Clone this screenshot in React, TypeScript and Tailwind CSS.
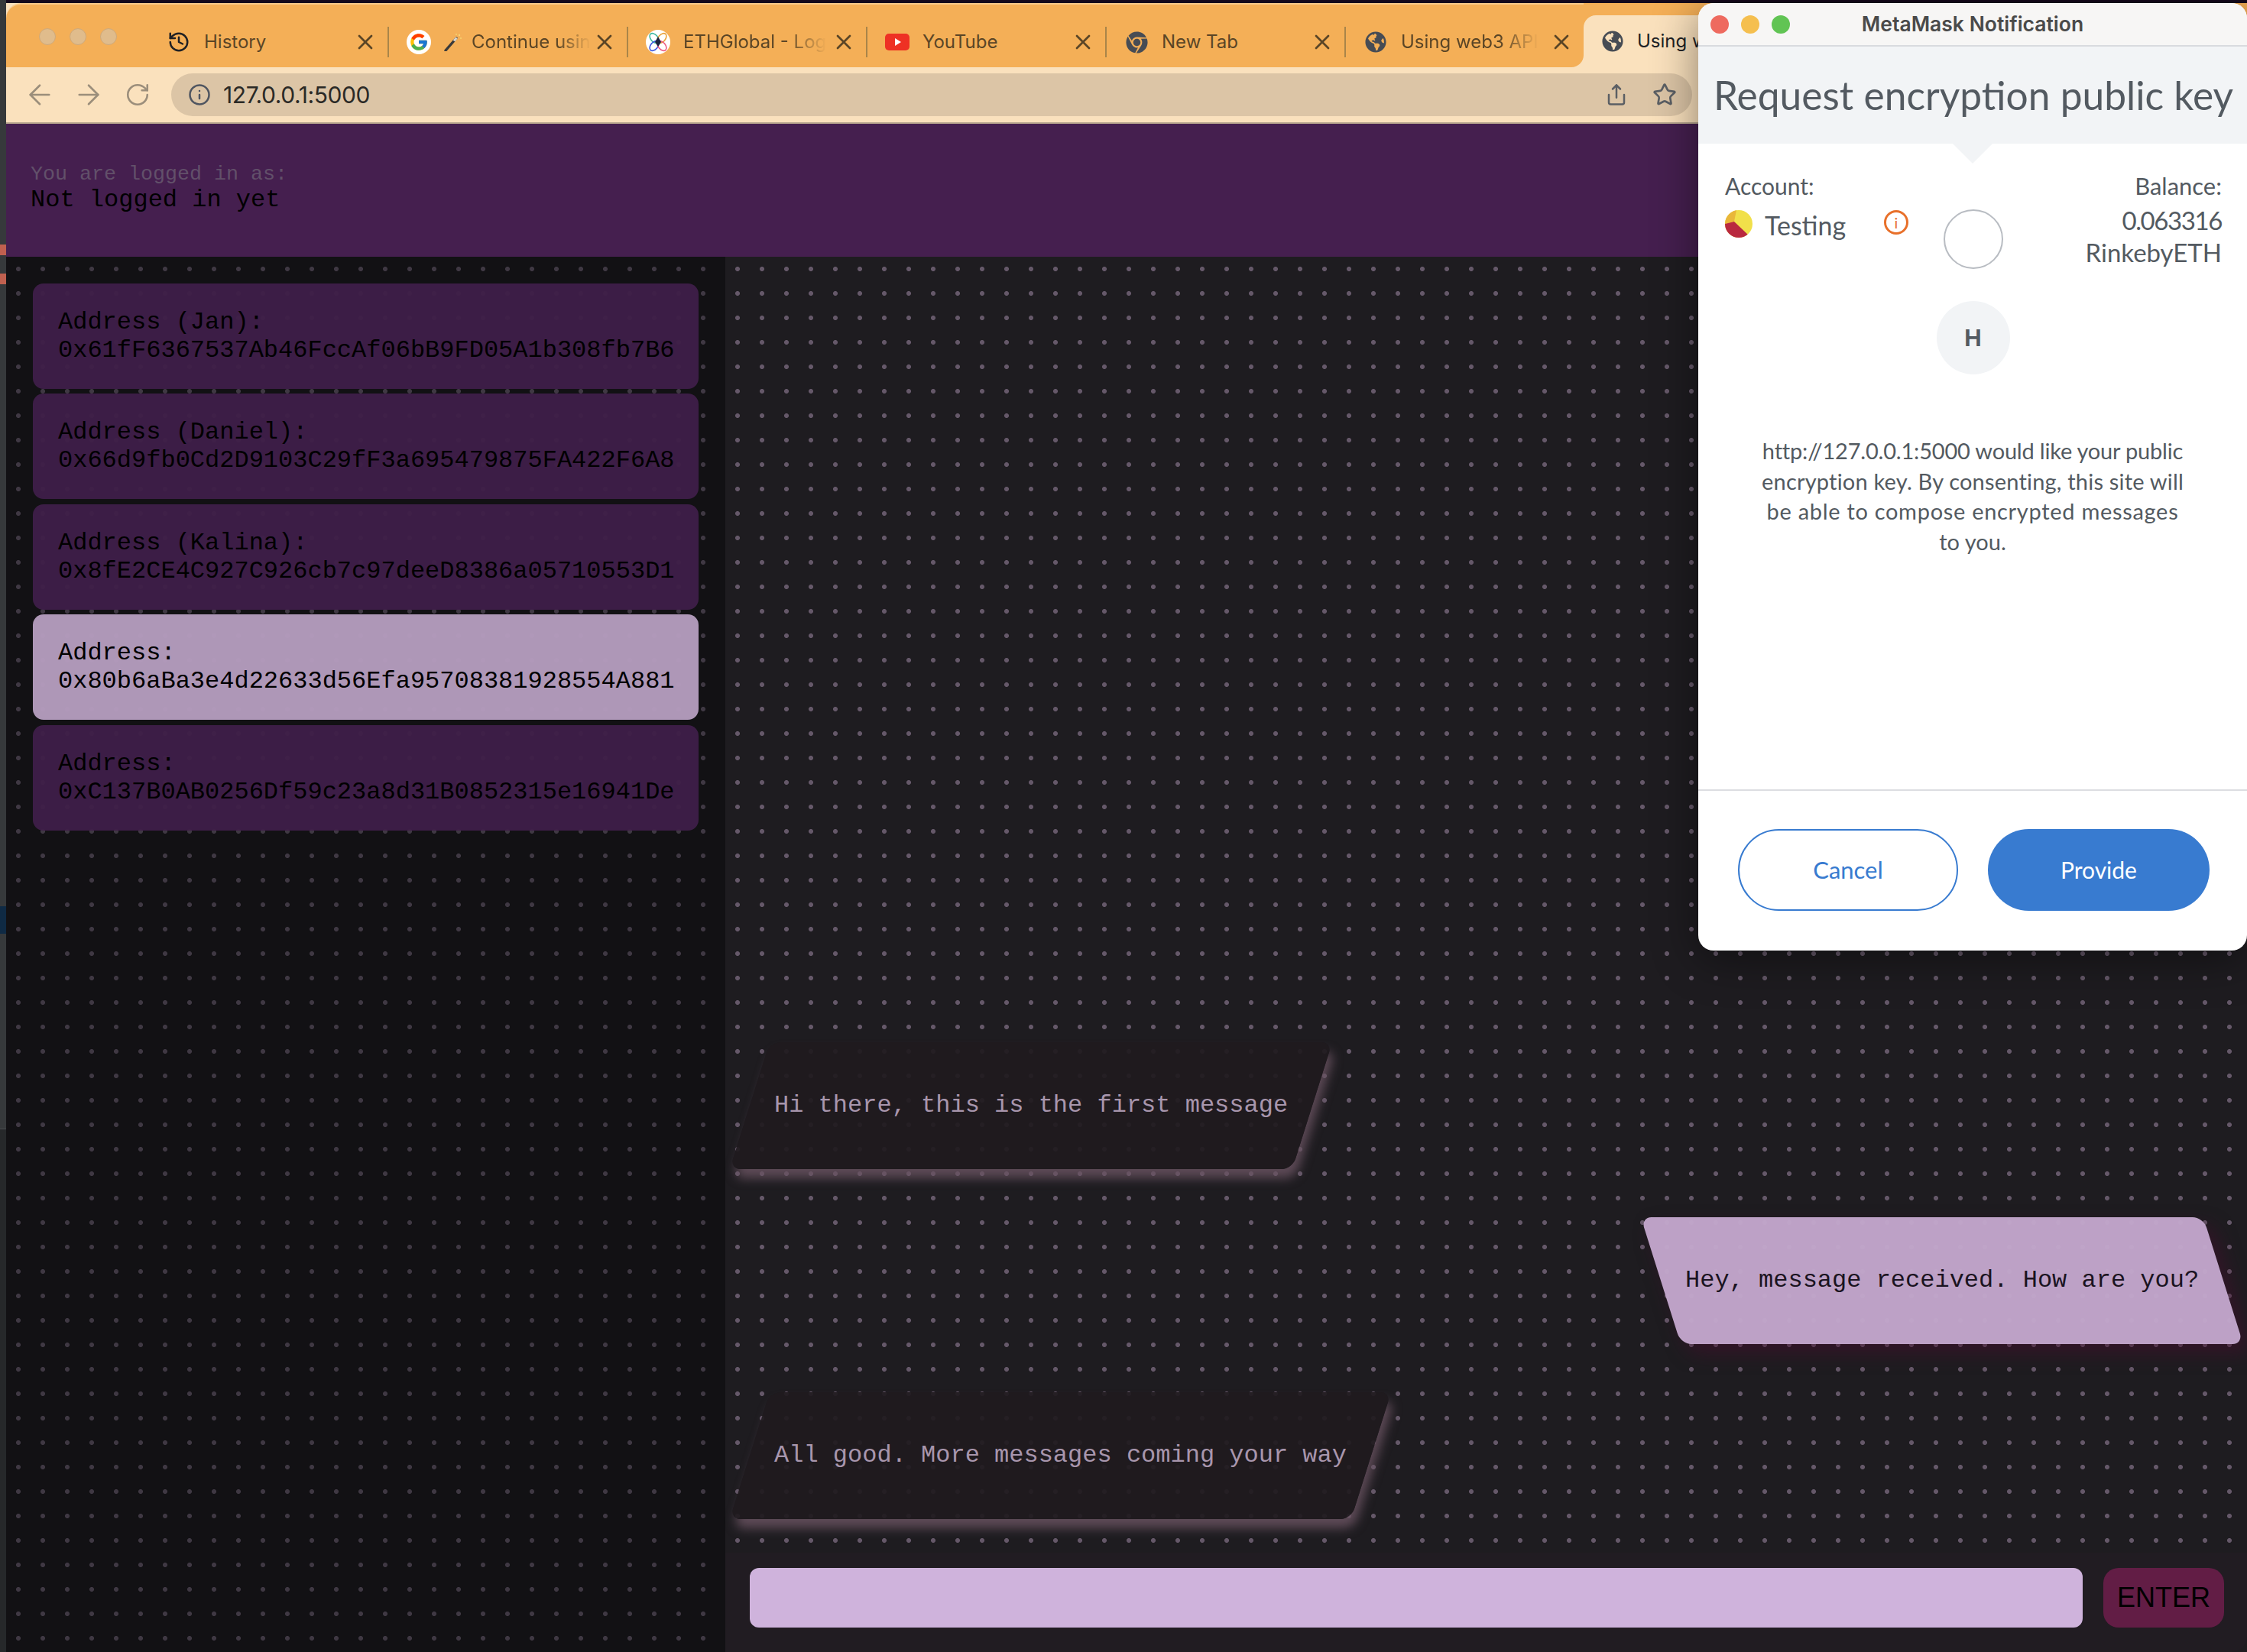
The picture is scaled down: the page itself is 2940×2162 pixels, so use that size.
import React from 'react';
import { ArrowLeft, ArrowRight, History, Info, RotateCw, Share, Star, X } from 'lucide-react';
import { FcGoogle } from 'react-icons/fc';
import { FaChrome, FaGlobeAmericas } from 'react-icons/fa';

const WandIcon = () => (
  <svg width="24" height="24" viewBox="0 0 24 24" className="shrink-0">
    <path d="M2 23 L16 7" stroke="#3a3a3a" strokeWidth="3.4" strokeLinecap="round" />
    <path d="M13 10.5 L16.5 6.5" stroke="#d9d4c8" strokeWidth="3.4" />
    <circle cx="20" cy="3" r="1.2" fill="#f7d774" />
    <circle cx="22" cy="7" r="0.9" fill="#f7d774" />
    <circle cx="16" cy="2" r="0.9" fill="#f7d774" />
  </svg>
);

const EthGlobalIcon = () => (
  <svg width="32" height="32" viewBox="0 0 32 32">
    <circle cx="16" cy="16" r="16" fill="#fff" />
    <ellipse cx="11" cy="11" rx="4.6" ry="7.4" transform="rotate(-40 11 11)" fill="none" stroke="#3fb8a0" strokeWidth="1.6" />
    <ellipse cx="21" cy="11" rx="4.6" ry="7.4" transform="rotate(40 21 11)" fill="none" stroke="#e9a23b" strokeWidth="1.6" />
    <ellipse cx="11" cy="21" rx="4.6" ry="7.4" transform="rotate(40 11 21)" fill="none" stroke="#3a56e0" strokeWidth="1.6" />
    <ellipse cx="21" cy="21" rx="4.6" ry="7.4" transform="rotate(-40 21 21)" fill="none" stroke="#ec5a82" strokeWidth="1.6" />
    <path d="M16 9 L20 16 L16 22 L12 16 Z" fill="#1c2440" />
  </svg>
);

const YouTubeIcon = () => (
  <svg width="32" height="22" viewBox="0 0 32 22">
    <rect width="32" height="22" rx="5" fill="#ee3124" />
    <path d="M13 6 L21 11 L13 16 Z" fill="#fff" />
  </svg>
);

const AccountIcon = () => (
  <svg width="36" height="36" viewBox="0 0 36 36" className="shrink-0">
    <defs>
      <clipPath id="acct">
        <circle cx="18" cy="18" r="18" />
      </clipPath>
    </defs>
    <g clipPath="url(#acct)">
      <rect width="36" height="36" fill="#f1e04a" />
      <path d="M0 0 H15 L12 15 L0 18 Z" fill="#e9b73a" />
      <path d="M0 18 L12 15 L31 33 V36 H0 Z" fill="#b9293f" />
    </g>
  </svg>
);

type TabData = { title: string; icon: React.ReactNode; extra?: React.ReactNode; fade?: boolean };

const tabs: TabData[] = [
  { title: 'History', icon: <History size={30} strokeWidth={2} className="text-[#202124]" /> },
  {
    title: 'Continue usin',
    icon: (
      <span className="flex h-8 w-8 items-center justify-center rounded-full bg-white">
        <FcGoogle size={26} />
      </span>
    ),
    extra: <WandIcon />,
    fade: true,
  },
  { title: 'ETHGlobal - Log', icon: <EthGlobalIcon />, fade: true },
  { title: 'YouTube', icon: <YouTubeIcon /> },
  { title: 'New Tab', icon: <FaChrome size={29} className="text-[#474c54]" /> },
  { title: 'Using web3 API', icon: <FaGlobeAmericas size={28} className="text-[#474c54]" />, fade: true },
];

const Tab = ({ tab, first }: { tab: TabData; first?: boolean }) => (
  <div className={`flex h-10 shrink-0 items-center border-r-2 border-[#a98549] ${first ? 'w-[314px]' : 'w-[313px]'}`}>
    <span className="ml-[23px] flex w-8 shrink-0 items-center justify-center">{tab.icon}</span>
    <div className="ml-[17px] flex min-w-0 flex-1 items-center gap-[12px]">
      {tab.extra}
      <span
        className={`whitespace-nowrap font-['Inter',sans-serif] text-[24px] text-[#5a4526] ${
          tab.fade ? '[mask-image:linear-gradient(to_right,black_72%,transparent)]' : ''
        }`}
      >
        {tab.title}
      </span>
    </div>
    <X size={32} strokeWidth={2} className="mr-[13px] ml-[10px] shrink-0 text-[#5a4526]" />
  </div>
);

const BrowserChrome = () => (
  <div className="flex shrink-0 flex-col">
    <div className="flex h-[84px] bg-[#fae1bd]">
      <div className="flex h-full w-[2064px] shrink-0 rounded-tl-[20px] rounded-br-[16px] border-t-2 border-[#f9c98a] bg-[#f4af57] pt-[29px]">
        <div className="flex h-10 w-[187px] shrink-0 items-start gap-[18px] pl-[43px] pt-[2px]">
          <span className="h-[22px] w-[22px] rounded-full border border-[#cfa97a] bg-[#e0bc8c]" />
          <span className="h-[22px] w-[22px] rounded-full border border-[#cfa97a] bg-[#e0bc8c]" />
          <span className="h-[22px] w-[22px] rounded-full border border-[#cfa97a] bg-[#e0bc8c]" />
        </div>
        {tabs.map((t, i) => (
          <Tab key={t.title} tab={t} first={i === 0} />
        ))}
      </div>
      <div className="flex-1 bg-[#f4af57] pt-4">
        <div className="h-[68px] rounded-t-[16px] bg-[#fae1bd] pl-6 pt-[14px]">
          <div className="flex h-10 items-center">
            <FaGlobeAmericas size={28} className="mr-[18px] shrink-0 text-[#474c54]" />
            <span className="whitespace-nowrap font-['Inter',sans-serif] text-[24px] text-[#202124]">Using w</span>
          </div>
        </div>
      </div>
    </div>
    <div className="flex h-[74px] items-center border-b-2 border-[#b9a78f] bg-[#fae1bd]">
      <div className="flex w-[216px] shrink-0 items-center text-[#9b8e7b]">
        <ArrowLeft size={42} strokeWidth={1.5} className="ml-[23px]" />
        <ArrowRight size={42} strokeWidth={1.5} className="ml-[22px]" />
        <RotateCw size={34} strokeWidth={1.8} className="ml-[26px]" />
      </div>
      <div className="flex h-14 w-[1990px] shrink-0 items-center rounded-full bg-[#dcc5a6]">
        <Info size={30} strokeWidth={2} className="ml-[22px] shrink-0 text-[#4f5560]" />
        <span className="ml-[16px] font-['Inter',sans-serif] text-[30px] tracking-[-0.4px] text-[#2b2a26]">127.0.0.1:5000</span>
        <Share size={30} strokeWidth={2} className="ml-auto shrink-0 text-[#5b5f64]" />
        <Star size={32} strokeWidth={2} className="mr-5 ml-[32px] shrink-0 text-[#5b5f64]" />
      </div>
    </div>
  </div>
);

const addresses = [
  { label: 'Address (Jan):', value: '0x61fF6367537Ab46FccAf06bB9FD05A1b308fb7B6' },
  { label: 'Address (Daniel):', value: '0x66d9fb0Cd2D9103C29fF3a695479875FA422F6A8' },
  { label: 'Address (Kalina):', value: '0x8fE2CE4C927C926cb7c97deeD8386a05710553D1' },
  { label: 'Address:', value: '0x80b6aBa3e4d22633d56Efa95708381928554A881', active: true },
  { label: 'Address:', value: '0xC137B0AB0256Df59c23a8d31B0852315e16941De' },
];

const Sidebar = () => (
  <aside className="flex w-[941px] shrink-0 flex-col gap-[6.4px] bg-[#121114] bg-[radial-gradient(circle,#3f3843_2.6px,transparent_3.4px)] bg-[length:32px_32px] px-[35px] pt-[35px]">
    {addresses.map((a) => (
      <div
        key={a.value}
        className={`h-[138px] rounded-[14px] px-[33px] py-8 text-[32px] leading-[37px] text-black ${
          a.active ? 'bg-[#b49cbd]/97' : 'bg-[#3f1f49]/95'
        }`}
      >
        <div>{a.label}</div>
        <div>{a.value}</div>
      </div>
    ))}
  </aside>
);

const Bubble = ({ text, mine }: { text: string; mine?: boolean }) => (
  <div
    className={
      mine
        ? 'mr-[31px] w-fit self-end skew-x-[17.5deg] rounded-[14px] bg-[#c2a6cb]/97 px-8 py-16 text-[#1a1320] shadow-[8px_12px_24px_rgba(70,15,45,0.55)]'
        : 'ml-8 w-fit self-start skew-x-[-17.5deg] rounded-[14px] bg-[#1f1a1e]/92 px-8 py-16 text-[#a896ad] shadow-[8px_12px_14px_rgba(105,82,96,0.85)]'
    }
  >
    <div className={`whitespace-nowrap text-[32px] leading-[38px] ${mine ? 'skew-x-[-17.5deg]' : 'skew-x-[17.5deg]'}`}>
      {text}
    </div>
  </div>
);

const Chat = () => (
  <main className="flex min-w-0 flex-1 flex-col bg-[#1e1c20]">
    <div className="flex flex-1 flex-col justify-end gap-[63px] bg-[radial-gradient(circle,#655869_2.6px,transparent_3.4px)] bg-[length:32px_32px] pb-[44px]">
      <Bubble text="Hi there, this is the first message" />
      <Bubble text="Hey, message received. How are you?" mine />
      <Bubble text="All good. More messages coming your way" />
    </div>
    <div className="flex h-[130px] shrink-0 items-start gap-[27px] rounded-br-[20px] bg-[#211c22] pt-5 pr-[30px] pl-8">
      <input className="h-[78px] w-[1744px] rounded-[12px] bg-[#cfb3dc]" />
      <button
        type="button"
        className="h-[78px] w-[158px] rounded-[20px] bg-[#621d45] font-['Liberation_Sans',sans-serif] text-[36px] text-black"
      >
        ENTER
      </button>
    </div>
  </main>
);

const MetaMaskPopup = () => (
  <div className="absolute top-1 left-[2222px] flex h-[1240px] w-[718px] flex-col overflow-hidden rounded-[20px] bg-white font-['Lato',sans-serif] text-[#535a61] shadow-[0_10px_60px_rgba(0,0,0,0.45)]">
    <div className="relative flex h-[57px] shrink-0 items-center justify-center border-b-2 border-[#d9dbde] bg-[#f7f6f5]">
      <div className="absolute top-4 left-4 flex gap-4">
        <span className="h-6 w-6 rounded-full bg-[#ee6a5f]" />
        <span className="h-6 w-6 rounded-full bg-[#f5bf4f]" />
        <span className="h-6 w-6 rounded-full bg-[#61c454]" />
      </div>
      <span className="font-['Inter',sans-serif] text-[26.5px] font-semibold text-[#4a4a4a]">MetaMask Notification</span>
    </div>
    <div className="relative flex h-[127px] shrink-0 items-center bg-[#f2f4f6] pl-[20px]">
      <span className="whitespace-nowrap text-[51.5px] text-[#535a61]">Request encryption public key</span>
      <span className="absolute top-full left-[333px] h-0 w-0 border-x-[26px] border-t-[26px] border-x-transparent border-t-[#f2f4f6]" />
    </div>
    <div className="grid shrink-0 grid-cols-[240px_1fr_240px] pt-[37px] pr-[33px] pl-[35px]">
      <div>
        <div className="text-[30px] leading-9">Account:</div>
        <div className="mt-[14px] flex items-start">
          <AccountIcon />
          <span className="ml-4 text-[34px] leading-[40px]">Testing</span>
          <span className="ml-auto flex h-8 w-8 items-center justify-center rounded-full border-[3px] border-[#e8702a] text-[20px] leading-none text-[#e8702a]">
            i
          </span>
        </div>
      </div>
      <div className="flex justify-center pt-[49px]">
        <div className="h-[78px] w-[78px] rounded-full border-2 border-[#b8bcc2]" />
      </div>
      <div className="text-right">
        <div className="text-[31px] leading-9">Balance:</div>
        <div className="mt-[6px] text-[33px] leading-[42px]">
          <span className="tracking-[-1.4px]">0.063316</span>
          <br />
          RinkebyETH
        </div>
      </div>
    </div>
    <div className="mt-[42px] ml-[1px] flex h-24 w-24 shrink-0 items-center justify-center self-center rounded-full bg-[#f2f4f6] font-['Inter',sans-serif] text-[30px] font-bold text-[#535a61]">
      H
    </div>
    <p className="mt-[80px] text-center text-[29px] leading-[39.5px]">
      <span className="tracking-[-0.2px]">http://127.0.0.1:5000 would like your public</span>
      <br />
      <span className="tracking-[0.2px]">encryption key. By consenting, this site will</span>
      <br />
      <span className="tracking-[0.7px]">be able to compose encrypted messages</span>
      <br />
      to you.
    </p>
    <div className="mt-auto flex h-[211px] shrink-0 items-start border-t-2 border-[#dcdde1] pt-[50px] pl-[52px]">
      <button type="button" className="h-[107px] w-[288px] rounded-full border-2 border-[#387bd0] text-[31px] text-[#387bd0]">
        Cancel
      </button>
      <button type="button" className="ml-[39px] h-[107px] w-[290px] rounded-full bg-[#387bd0] text-[30px] text-white">
        Provide
      </button>
    </div>
  </div>
);

// the sliver of editor window that shows behind the browser
const EditorEdge = () => (
  <div className="flex w-2 shrink-0 flex-col bg-[#36393b]">
    <div className="h-[320px] shrink-0" />
    <div className="h-[14px] w-2 shrink-0 bg-[#c0604f]" />
    <div className="h-6 shrink-0" />
    <div className="h-[14px] w-2 shrink-0 bg-[#c0604f]" />
    <div className="h-[814px] shrink-0" />
    <div className="h-9 shrink-0 bg-[#0f2a44]" />
    <div className="h-[256px] shrink-0 border-b border-[#4a4d50]" />
    <div className="flex-1 bg-[#26282a]" />
  </div>
);

export default function App() {
  return (
    <div className="relative flex h-[2162px] w-[2940px] overflow-hidden bg-[#15091c] font-['Liberation_Mono',monospace]">
      <EditorEdge />
      <div className="mt-1 flex min-w-0 flex-1 flex-col">
        <BrowserChrome />
        <header className="flex h-[174px] shrink-0 flex-col bg-[#451f4f] pt-[50px] pl-8">
          <div className="text-[26.67px] leading-[32px] text-[#62506a]">You are logged in as:</div>
          <div className="text-[32px] leading-[36px] text-black">Not logged in yet</div>
        </header>
        <div className="flex min-h-0 flex-1">
          <Sidebar />
          <Chat />
        </div>
      </div>
      <MetaMaskPopup />
    </div>
  );
}
